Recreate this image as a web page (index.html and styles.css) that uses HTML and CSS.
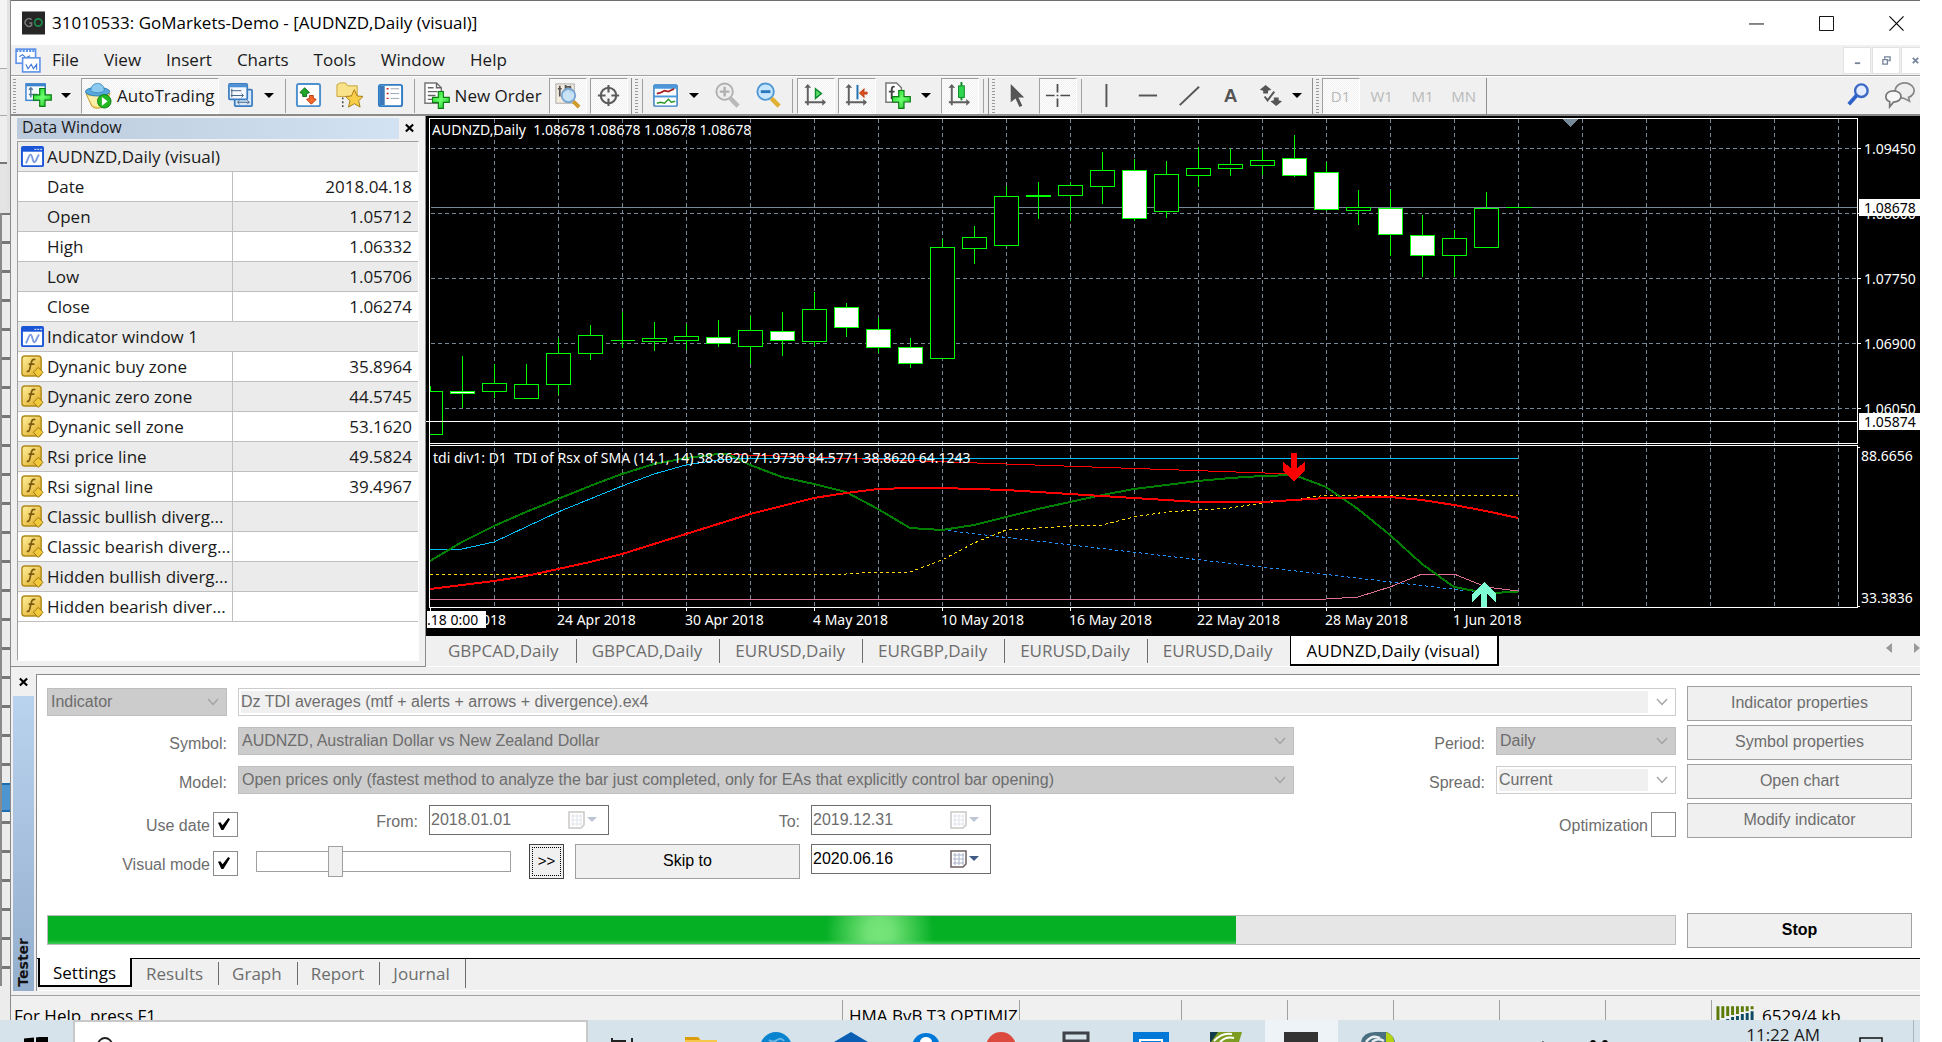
FILE: index.html
```html
<!DOCTYPE html>
<html lang="en">
<head>
<meta charset="utf-8">
<title>31010533: GoMarkets-Demo - [AUDNZD,Daily (visual)]</title>
<link rel="stylesheet" href="styles.css">
</head>
<body>
<svg class="defs" aria-hidden="true">
  <defs>
    <linearGradient id="gold" x1="0" y1="0" x2="1" y2="1"><stop offset="0" stop-color="#fff0a0"/><stop offset="1" stop-color="#dfa81c"/></linearGradient>
    <linearGradient id="grn" x1="0" y1="0" x2="1" y2="1"><stop offset="0" stop-color="#0fd01f"/><stop offset=".5" stop-color="#6dff6d"/><stop offset="1" stop-color="#08b018"/></linearGradient>
    <symbol id="i-fn" viewBox="0 0 24 24"><rect x="1" y="1" width="20" height="21" rx="3" fill="url(#gold)" stroke="#b08a1a" stroke-width="1.500"/><path d="M15 5c-3-1.500-4 1-4.500 4l-1.500 6c-.5 2-1.500 2.500-3 2M8 9.500h6" fill="none" stroke="#7a5a10" stroke-width="1.800"/><path d="M18 13l5 5-5 5.500-5-5.500z" fill="#f3c93c" stroke="#9a7613"/></symbol>
    <symbol id="i-win" viewBox="0 0 24 22"><rect x="1" y="1" width="22" height="20" rx="1" fill="#fff" stroke="#1b56d8" stroke-width="2"/><path d="M1 1h22v5H1z" fill="#1b56d8"/><path d="M14 3.500h2m1 0h2m1 0h2" stroke="#fff"/><path d="M5 18C7 16 8 9 10 9s2 8 4 8 3-7 5-8" fill="none" stroke="#7c9ae0" stroke-width="2"/></symbol>
    <symbol id="i-plus" viewBox="0 0 16 16"><path d="M5.800.6h4.400v5.200h5.200v4.400h-5.200v5.200H5.800v-5.200H.6V5.800h5.200z" fill="url(#grn)" stroke="#0b7d12"/></symbol>
    <symbol id="i-axes" viewBox="0 0 28 28"><path d="M6 5v19M3 21h19" fill="none" stroke="#606060" stroke-width="2"/><path d="M6 2l3.500 4h-7zM25 21l-4 3.500v-7z" fill="#606060"/></symbol>
    <symbol id="i-cal" viewBox="0 0 18 18"><path d="M1 1h15v13l-3 3H1z" fill="#fff" stroke="#6b5f60" stroke-width="1.500"/><path d="M3 5h11M3 9h11M3 13h11M5 3v12M9 3v12M13 3v12" stroke="#a9b4c8"/></symbol>
    <symbol id="i-chev" viewBox="0 0 12 8"><path d="M1 1l5 5.500L11 1" fill="none" stroke="#a2a2a2" stroke-width="1.300"/></symbol>
  </defs>
</svg>

<div class="desktop">
  <div class="behind" aria-hidden="true">
    <div class="behind-top"></div>
    <div class="behind-grid"><div class="behind-sel"></div></div>
  </div>

  <div class="app">
    <header class="titlebar">
      <svg class="logo" viewBox="0 0 24 24"><rect width="24" height="24" fill="#262626"/><path d="M10 8.500a4 4 0 1 0 0 6v-2.500H7.500" fill="none" stroke="#7b7b7b" stroke-width="1.600"/><circle cx="17" cy="11.500" r="3.800" fill="none" stroke="#1e8a4a" stroke-width="1.800"/></svg>
      <h1>31010533: GoMarkets-Demo - [AUDNZD,Daily (visual)]</h1>
      <div class="winctl">
        <button aria-label="Minimize"><svg viewBox="0 0 16 16"><path d="M0 8.500h16" stroke="#000"/></svg></button>
        <button aria-label="Maximize"><svg viewBox="0 0 16 16"><path d="M.5.5h15v15H.5z" fill="none" stroke="#000"/></svg></button>
        <button aria-label="Close"><svg viewBox="0 0 16 16"><path d="M.5.5l15 15m0-15l-15 15" stroke="#000" stroke-width="1.200"/></svg></button>
      </div>
    </header>

    <nav class="menubar">
      <svg class="menu-icon" viewBox="0 0 24 24"><rect x="1" y="2" width="18" height="13" fill="#fff" stroke="#5f93e8" stroke-width="1.500"/><path d="M1 3h18" stroke="#5f93e8" stroke-width="3" stroke-dasharray="2 1"/><path d="M4 9l3-2 3 3 4-2" fill="none" stroke="#3f78d8"/><rect x="7" y="10" width="16" height="13" fill="#fff" stroke="#5f93e8" stroke-width="1.500"/><path d="M10 16l2 4 3-4 2 4 3-4v5" fill="none" stroke="#3f78d8"/></svg>
      <a href="#">File</a><a href="#">View</a><a href="#">Insert</a><a href="#">Charts</a><a href="#">Tools</a><a href="#">Window</a><a href="#">Help</a>
      <div class="mdictl">
        <button aria-label="Minimize chart"><svg viewBox="0 0 10 10"><path d="M2 8h6" stroke="#76859a" stroke-width="2"/></svg></button>
        <button aria-label="Restore chart"><svg viewBox="0 0 10 10"><path d="M3 3V1h6v4H7M1 4h5v5H1z" fill="none" stroke="#76859a" stroke-width="1.500"/></svg></button>
        <button aria-label="Close chart"><svg viewBox="0 0 10 10"><path d="M2 2l6 6m0-6L2 8" stroke="#76859a" stroke-width="2"/></svg></button>
      </div>
    </nav>

    <div class="toolbar">
      <div class="group">
        <i class="grip"></i>
        <div class="split">
          <button class="tb" aria-label="New chart"><svg viewBox="0 0 28 28"><rect x="1" y="2" width="20" height="17" fill="#f6faff" stroke="#3c82cc" stroke-width="1.500"/><path d="M1 3h20" stroke="#3c82cc" stroke-width="3"/><path d="M6 6v10M4 13h9M4 8l2-2 2 2" stroke="#56789a" stroke-width="1.500" fill="none"/><use href="#i-plus" x="8" y="6" width="20" height="20"/></svg></button>
          <button class="drop" aria-label="Charts list"></button>
        </div>
        <button class="tb pressed wide"><svg viewBox="0 0 28 28"><path d="M1 12l6 13c3 3 9 3 12 0l7-13z" fill="#f3d866" stroke="#c29a35"/><path d="M3 15l5 9 6 2V14z" fill="#fbeea6"/><ellipse cx="13" cy="10" rx="12.500" ry="4.500" fill="#5aa9dc" stroke="#2f7fb4"/><path d="M6 9c0-10 14-10 14 0-4 3-10 3-14 0z" fill="#8ccaf0" stroke="#3b8cc0"/><circle cx="20" cy="20" r="7" fill="#22b822" stroke="#0c7d12"/><path d="M17.500 15.500l6 4.500-6 4.500z" fill="#fff"/></svg>AutoTrading</button>
        <div class="split">
          <button class="tb" aria-label="Profiles"><svg viewBox="0 0 28 28"><rect x="8" y="8" width="18" height="17" rx="1" fill="#d6e8fa" stroke="#3b7cc0" stroke-width="1.800"/><path d="M11 21h12M13 19l-2 2 2 2M21 19l2 2-2 2" stroke="#44617f" fill="none"/><rect x="2" y="2" width="19" height="16" rx="1" fill="#f4f9ff" stroke="#3b7cc0" stroke-width="1.800"/><path d="M2 4h19" stroke="#4d90d6" stroke-width="3"/><path d="M4 9h11M4 14h13M5 7v9M15 12l2 2-2 2" stroke="#44617f" fill="none"/></svg></button>
          <button class="drop" aria-label="Profiles list"></button>
        </div>
        <i class="sep"></i>
        <button class="tb" aria-label="Market Watch"><svg viewBox="0 0 28 28"><rect x="2" y="2" width="24" height="23" rx="2" fill="#fff" stroke="#4d90cf" stroke-width="2"/><path d="M10 6l5 5-3 1v3H8v-3l-3-1z" fill="#1fa82a" stroke="#0b6d14"/><path d="M17 23l-5-5 3-1v-3h4v3l3 1z" fill="#f2682c" stroke="#c03a10"/></svg></button>
        <button class="tb" aria-label="Navigator"><svg viewBox="0 0 28 28"><path d="M1 3l3-2h6l2 3h10v11H1z" fill="#f9e28a" stroke="#c9a235"/><path d="M7 16v10" stroke="#444" stroke-width="1.500" stroke-dasharray="2 2"/><path d="M19 8l3 6.500 6 .5-4.500 4.500 1.500 6.500-6-3.500-6 3.500 1.500-6.500L10 15l6-.5z" fill="#f9cf4a" stroke="#a97a14"/></svg></button>
        <button class="tb" aria-label="Data Window"><svg viewBox="0 0 28 28"><rect x="2" y="3" width="24" height="22" rx="2" fill="#fff" stroke="#2e7cc4" stroke-width="2"/><path d="M3 4h5v20H3z" fill="#3b78b8"/><path d="M10 7h2m-2 5h2m-2 5h2" stroke="#c22" stroke-width="1.500"/><path d="M14 7h9m-9 5h9m-9 5h9" stroke="#9aa2b0"/></svg></button>
        <i class="sep"></i>
        <button class="tb wide"><svg viewBox="0 0 28 28"><path d="M2 1h12l5 5v16H2z" fill="#fff" stroke="#777" stroke-width="1.500"/><path d="M14 1v5h5M5 6h6M5 10h10M5 14h8M5 18h6" stroke="#666" fill="none" stroke-width="1.500"/><use href="#i-plus" x="9" y="9" width="19" height="19"/></svg>New Order</button>
        <button class="tb pressed" aria-label="Strategy Tester"><svg viewBox="0 0 28 28"><rect x="2" y="2" width="19" height="20" fill="#f3ecdf" stroke="#aaa"/><path d="M6 4v11M12 3v7M17 4v7M4 7h4M12 5h5" stroke="#555" stroke-width="1.800"/><circle cx="15" cy="14" r="7" fill="#bfe0fa" fill-opacity=".85" stroke="#7aa6d2" stroke-width="2"/><path d="M20 20l6 6" stroke="#d09a2b" stroke-width="4"/></svg></button>
        <button class="tb pressed" aria-label="Crosshair mode"><svg viewBox="0 0 28 28"><circle cx="14" cy="14" r="8" fill="none" stroke="#5c5c5c" stroke-width="2.200"/><path d="M14 3v8m0 6v8M3 14h8m6 0h8" stroke="#5c5c5c" stroke-width="2.200"/></svg></button>
      </div>
      <div class="group">
        <i class="grip"></i><i class="sep"></i>
        <div class="split">
          <button class="tb" aria-label="Indicators"><svg viewBox="0 0 28 28"><rect x="2" y="3" width="24" height="22" rx="1" fill="#fff" stroke="#2f7cc2" stroke-width="1.500"/><path d="M2 5h24" stroke="#4b97da" stroke-width="4"/><path d="M2 15h24" stroke="#4b97da" stroke-width="2"/><path d="M5 12l4-1 4-2 4 1 6-3" fill="none" stroke="#a22" stroke-width="1.800"/><path d="M5 22l4-1 4 1 4-4 3 3 4-1" fill="none" stroke="#2a9a2a" stroke-width="1.500"/></svg></button>
          <button class="drop" aria-label="Indicators list"></button>
        </div>
        <button class="tb" aria-label="Zoom in"><svg viewBox="0 0 28 28"><circle cx="11" cy="10" r="8.500" fill="#eee" stroke="#b0b0b0" stroke-width="2"/><path d="M6 10h10M11 5v10" stroke="#b0b0b0" stroke-width="2.500"/><path d="M17 17l8 8" stroke="#b8b8b8" stroke-width="4.500"/></svg></button>
        <button class="tb" aria-label="Zoom out"><svg viewBox="0 0 28 28"><circle cx="11" cy="10" r="8.500" fill="#c6e6fc" stroke="#4f97d4" stroke-width="2"/><path d="M6 10h10" stroke="#2b78bd" stroke-width="3"/><path d="M17 17l8 8" stroke="#e0b032" stroke-width="4.500"/></svg></button>
        <i class="sep"></i>
        <button class="tb pressed" aria-label="Auto scroll"><svg viewBox="0 0 28 28"><use href="#i-axes"/><path d="M14 7l6 5-6 5z" fill="#5fe06f" stroke="#0d8a2a" stroke-width="1.500"/></svg></button>
        <button class="tb pressed" aria-label="Chart shift"><svg viewBox="0 0 28 28"><use href="#i-axes"/><path d="M15 3v15" stroke="#1e6fb0" stroke-width="2"/><path d="M17 11.500l5-4.500-.5 3.500H25v2h-3.500l.5 3.500z" fill="#e0501c" stroke="#b83a10"/></svg></button>
        <div class="split">
          <button class="tb" aria-label="Templates"><svg viewBox="0 0 28 28"><path d="M2 1h11l5 5v15H2z" fill="#fff" stroke="#777" stroke-width="1.500"/><path d="M11 5c-3-1-3 2-3 4v9M5 10h6" stroke="#444" fill="none" stroke-width="2"/><use href="#i-plus" x="8" y="8" width="20" height="20"/></svg></button>
          <button class="drop" aria-label="Templates list"></button>
        </div>
        <button class="tb pressed" aria-label="Candlesticks"><svg viewBox="0 0 28 28"><use href="#i-axes"/><path d="M16 0v19" stroke="#0d8a2a" stroke-width="2"/><rect x="13" y="4" width="6" height="12" fill="#2fd44f" stroke="#0d8a2a"/></svg></button>
        <i class="sep"></i>
      </div>
      <div class="group">
        <i class="grip"></i>
        <button class="tb" aria-label="Cursor"><svg viewBox="0 0 28 28"><path d="M8 2v19l5-4 4 9 3-1.500-4-8.500h6z" fill="#555"/></svg></button>
        <button class="tb pressed" aria-label="Crosshair"><svg viewBox="0 0 28 28"><path d="M14 2v9m0 6v9M2 14h9m6 0h10M14 13.200v1.600" stroke="#4c4c4c" stroke-width="1.800"/></svg></button>
        <i class="sep"></i>
        <button class="tb" aria-label="Vertical line"><svg viewBox="0 0 28 28"><path d="M16 2v24" stroke="#555" stroke-width="2"/></svg></button>
        <button class="tb" aria-label="Horizontal line"><svg viewBox="0 0 28 28"><path d="M7 14h19" stroke="#555" stroke-width="2"/></svg></button>
        <button class="tb" aria-label="Trendline"><svg viewBox="0 0 28 28"><path d="M7 24L27 5" stroke="#555" stroke-width="2"/></svg></button>
        <button class="tb letter">A</button>
        <div class="split">
          <button class="tb" aria-label="Arrows"><svg viewBox="0 0 28 28"><path d="M11 3l6 5-3.500 1v3h-5V9L5 8zM22 25l-6-5 3.500-1v-3h5v3l3.500 1z" fill="#555"/><path d="M10 15l3 4 7-9" fill="none" stroke="#555" stroke-width="2"/></svg></button>
          <button class="drop" aria-label="Arrows list"></button>
        </div>
      </div>
      <div class="group">
        <i class="grip"></i>
        <button class="tb pressed tf" disabled>D1</button><button class="tb tf" disabled>W1</button><button class="tb tf" disabled>M1</button><button class="tb tf" disabled>MN</button>
      </div>
      <div class="tb-right">
        <button class="tb" aria-label="Search"><svg viewBox="0 0 28 28"><circle cx="18" cy="9" r="6.500" fill="#e3edff" stroke="#3a68c4" stroke-width="2.500"/><path d="M13 14l-8 9" stroke="#2d62c8" stroke-width="4"/></svg></button>
        <button class="tb chat" aria-label="Chat"><svg viewBox="0 0 36 28"><path d="M12 10a10 8 0 1 1 14 6l1 4-6-3c-5 0-9-3-9-7z" fill="#eee" stroke="#888" stroke-width="1.800"/><path d="M2 15a8 6 0 1 1 8 6l-4 5v-5.500C3 19.500 2 17 2 15z" fill="#f7f7f7" stroke="#777" stroke-width="1.800"/></svg></button>
      </div>
    </div>

    <main class="workspace">
      <aside class="datawin">
        <div class="caption"><h2>Data Window</h2><button class="close" aria-label="Close data window"><svg viewBox="0 0 10 10"><path d="M1 1l8 8m0-8L1 9" stroke="#000" stroke-width="2.400"/></svg></button></div>
        <div class="datalist">
          <table>
            <colgroup><col class="name-col"><col></colgroup>
            <tbody>
              <tr><th colspan="2"><svg><use href="#i-win"/></svg>AUDNZD,Daily (visual)</th></tr>
              <tr><td class="sub">Date</td><td>2018.04.18</td></tr>
              <tr><td class="sub">Open</td><td>1.05712</td></tr>
              <tr><td class="sub">High</td><td>1.06332</td></tr>
              <tr><td class="sub">Low</td><td>1.05706</td></tr>
              <tr><td class="sub">Close</td><td>1.06274</td></tr>
              <tr><th colspan="2"><svg><use href="#i-win"/></svg>Indicator window 1</th></tr>
              <tr><td><svg><use href="#i-fn"/></svg>Dynanic buy zone</td><td>35.8964</td></tr>
              <tr><td><svg><use href="#i-fn"/></svg>Dynanic zero zone</td><td>44.5745</td></tr>
              <tr><td><svg><use href="#i-fn"/></svg>Dynanic sell zone</td><td>53.1620</td></tr>
              <tr><td><svg><use href="#i-fn"/></svg>Rsi price line</td><td>49.5824</td></tr>
              <tr><td><svg><use href="#i-fn"/></svg>Rsi signal line</td><td>39.4967</td></tr>
              <tr><td><svg><use href="#i-fn"/></svg>Classic bullish diverg...</td><td></td></tr>
              <tr><td><svg><use href="#i-fn"/></svg>Classic bearish diverg...</td><td></td></tr>
              <tr><td><svg><use href="#i-fn"/></svg>Hidden bullish diverg...</td><td></td></tr>
              <tr><td><svg><use href="#i-fn"/></svg>Hidden bearish diver...</td><td></td></tr>
            </tbody>
          </table>
        </div>
      </aside>

      <section class="chartwin">
        <div class="chart">
          <svg class="plot" role="img" aria-label="AUDNZD daily candlestick chart">
            <g transform="translate(-426 -117)">
              <path class="grid" d="M494.500 120V608M558.500 120V608M622.500 120V608M686.500 120V608M750.500 120V608M814.500 120V608M878.500 120V608M942.500 120V608M1006.500 120V608M1070.500 120V608M1134.500 120V608M1198.500 120V608M1262.500 120V608M1326.500 120V608M1390.500 120V608M1454.500 120V608M1518.500 120V608M1582.500 120V608M1646.500 120V608M1710.500 120V608M1774.500 120V608M1838.500 120V608"/>
              <path class="grid" d="M431 149.500H4000M431 214.500H4000M431 279.500H4000M431 344.500H4000M431 409.500H4000"/>
              <path class="price" d="M431 208.500H4000"/>
              <path class="candle" d="M430.500 387V392M462.500 357V409M494.500 365V399M526.500 365V399M558.500 339V396M590.500 326V361M622.500 313V349M654.500 323V352M686.500 325V351M718.500 321V348M750.500 317V365M782.500 313V357M814.500 293V347M846.500 304V338M878.500 319V354M910.500 339V369M942.500 240V359M974.500 227V265M1006.500 187V246M1038.500 183V220M1070.500 183V222M1102.500 153V205M1134.500 160V222M1166.500 162V219M1198.500 148V188M1230.500 150V177M1262.500 151V176M1294.500 136V178M1326.500 163V212M1358.500 191V226M1390.500 191V257M1422.500 216V278M1454.500 231V278M1486.500 193V248"/>
              <path class="candle hollow" d="M418.500 392.500h24v43h-24zM482.500 384.500h24v8h-24zM514.500 385.500h24v14h-24zM546.500 354.500h24v31h-24zM578.500 336.500h24v18h-24zM610.500 341.500h24M642.500 339.500h24v3h-24zM674.500 337.500h24v4h-24zM738.500 331.500h24v16h-24zM802.500 310.500h24v32h-24zM930.500 248.500h24v111h-24zM962.500 238.500h24v11h-24zM994.500 197.500h24v49h-24zM1026.500 196.500h24v1h-24zM1058.500 186.500h24v10h-24zM1090.500 171.500h24v16h-24zM1154.500 175.500h24v37h-24zM1186.500 169.500h24v7h-24zM1218.500 165.500h24v4h-24zM1250.500 161.500h24v5h-24zM1346.500 208.500h24v3h-24zM1442.500 239.500h24v17h-24zM1474.500 209.500h24v39h-24zM1506 208.500h26"/>
              <path class="candle solid" d="M450.500 392.500h24v2h-24zM706.500 338.500h24v6h-24zM770.500 332.500h24v9h-24zM834.500 308.500h24v20h-24zM866.500 330.500h24v18h-24zM898.500 348.500h24v16h-24zM1122.500 171.500h24v48h-24zM1282.500 159.500h24v17h-24zM1314.500 173.500h24v37h-24zM1378.500 209.500h24v26h-24zM1410.500 236.500h24v20h-24z"/>
              <path d="M426 120H429V609H426z" fill="#000"/>
              <path d="M1562 120h16l-8 8z" fill="#778899"/>
              <path class="line" stroke="#00bfff" d="M430 550H462L494 543L526 528L558 513L590 500L622 487L654 475L686 466L718 461L742 459H1518"/>
              <path class="line" stroke="#ff0000" d="M718 455L1294 475"/>
              <path class="line dash" stroke="#1e90ff" d="M942 531L1486 594"/>
              <path class="line dash" stroke="#ffd700" d="M430 575H846L878 573H910L942 561L974 544L1006 531L1038 529L1070 527L1102 526L1134 518L1166 513L1198 511L1230 509L1262 504L1294 501L1326 496H1518"/>
              <path class="line" stroke="#db7093" d="M430 600H1326L1358 598L1390 588L1422 575H1454L1486 588L1518 592"/>
              <path class="line thick" stroke="#008000" d="M430 562L462 543L494 527L526 513L558 500L590 487L622 475L654 465L686 459L718 455H728L750 466L782 478L814 485L846 493L878 510L910 529L942 531L974 526L1006 518L1038 510L1070 503L1102 496L1134 490L1166 486L1198 482L1230 479L1262 477L1294 476L1326 488L1358 510L1390 536L1422 565L1454 588L1486 594L1518 593"/>
              <path class="line thick" stroke="#ff0000" d="M430 590L462 586L494 582L526 577L558 570L590 563L622 555L654 545L686 535L718 525L750 515L782 507L814 499L846 494L878 490L910 489H942L1006 491L1038 493L1070 495L1134 499L1198 503H1262L1294 501L1326 499L1390 498L1422 501L1454 506L1486 512L1518 519"/>
              <path d="M1291 454h6v15l8-6v8l-11 12-11-12v-8l8 6z" fill="#ff0000"/>
              <path d="M1481 608h6v-13l9 8v-8l-12-12-12 12v8l9-8z" fill="#7fffd4"/>
              <path class="frame" d="M4000 119.500H429.500V608.500H4000M429 444.500H4000M429 446.500H4000M426 422.500H4000M430.500 608V612M558.500 608V612M686.500 608V612M814.500 608V612M942.500 608V612M1070.500 608V612M1198.500 608V612M1326.500 608V612M1454.500 608V612"/>
              <g class="lbl">
                <text x="432" y="136" xml:space="preserve">AUDNZD,Daily  1.08678 1.08678 1.08678 1.08678</text>
                <text x="433" y="464" xml:space="preserve">tdi div1: D1  TDI of Rsx of SMA (14,1, 14) 38.8620 71.9730 84.5771 38.8620 64.1243</text>
                <text x="482" y="626">018</text><text x="557" y="626">24 Apr 2018</text><text x="685" y="626">30 Apr 2018</text><text x="813" y="626">4 May 2018</text><text x="941" y="626">10 May 2018</text><text x="1069" y="626">16 May 2018</text><text x="1197" y="626">22 May 2018</text><text x="1325" y="626">28 May 2018</text><text x="1453" y="626">1 Jun 2018</text>
                <path d="M427 612h59v17h-59z" fill="#fff"/><text class="inv" x="427" y="626">.18 0:00</text>
              </g>
            </g>
          </svg>
          <svg class="axis" role="img" aria-label="Price axis">
            <g transform="translate(-1857 -117)">
              <path class="frame" d="M1857.500 119V445M1857.500 446V609M1858 149.500h3M1858 214.500h3M1858 279.500h3M1858 344.500h3M1858 409.500h3M1858 448.500h2M1858 607.500h2"/>
              <g class="lbl">
                <text x="1864" y="155">1.09450</text><text x="1864" y="220">1.08600</text><text x="1864" y="285">1.07750</text><text x="1864" y="350">1.06900</text><text x="1864" y="415">1.06050</text><text x="1861" y="462">88.6656</text><text x="1861" y="604">33.3836</text>
                <path d="M1859 200h61v17h-61zM1859 414h61v17h-61z" fill="#fff"/>
                <text class="inv" x="1864" y="214">1.08678</text><text class="inv" x="1864" y="428">1.05874</text>
              </g>
            </g>
          </svg>
        </div>
        <div class="charttabs">
          <button>GBPCAD,Daily</button><button>GBPCAD,Daily</button><button>EURUSD,Daily</button><button>EURGBP,Daily</button><button>EURUSD,Daily</button><button>EURUSD,Daily</button><button class="on">AUDNZD,Daily (visual)</button>
          <div class="scrollers"><button aria-label="Scroll tabs left"><svg viewBox="0 0 6 10"><path d="M6 0v10L0 5z" fill="#999"/></svg></button><button aria-label="Scroll tabs right"><svg viewBox="0 0 6 10"><path d="M0 0v10l6-5z" fill="#999"/></svg></button></div>
        </div>
      </section>
    </main>

    <section class="tester">
      <div class="side">
        <button class="close" aria-label="Close tester"><svg viewBox="0 0 10 10"><path d="M1 1l8 8m0-8L1 9" stroke="#000" stroke-width="2.400"/></svg></button>
        <div class="side-strip"><span>Tester</span></div>
      </div>
      <div class="tester-main">
        <form class="panel">
          <div class="fields">
            <div class="row">
              <div class="combo w180"><select disabled aria-label="Test type"><option>Indicator</option></select><svg><use href="#i-chev"/></svg></div>
              <div class="combo edit grow"><select disabled aria-label="Program"><option>Dz TDI averages (mtf + alerts + arrows + divergence).ex4</option></select><svg><use href="#i-chev"/></svg></div>
            </div>
            <div class="row">
              <label class="lead" for="symbol">Symbol:</label>
              <div class="combo grow"><select disabled id="symbol"><option>AUDNZD, Australian Dollar vs New Zealand Dollar</option></select><svg><use href="#i-chev"/></svg></div>
              <label class="mid" for="period">Period:</label>
              <div class="combo w180"><select disabled id="period"><option>Daily</option></select><svg><use href="#i-chev"/></svg></div>
            </div>
            <div class="row">
              <label class="lead" for="model">Model:</label>
              <div class="combo grow"><select disabled id="model"><option>Open prices only (fastest method to analyze the bar just completed, only for EAs that explicitly control bar opening)</option></select><svg><use href="#i-chev"/></svg></div>
              <label class="mid" for="spread">Spread:</label>
              <div class="combo edit w180"><select disabled id="spread"><option>Current</option></select><svg><use href="#i-chev"/></svg></div>
            </div>
            <div class="row">
              <div class="tick"><label for="usedate">Use date</label><input type="checkbox" id="usedate" checked></div>
              <label class="mid" for="from">From:</label>
              <div class="date off w180"><input type="text" id="from" value="2018.01.01" disabled><svg><use href="#i-cal"/></svg><i></i></div>
              <label class="mid" for="to">To:</label>
              <div class="date off w180"><input type="text" id="to" value="2019.12.31" disabled><svg><use href="#i-cal"/></svg><i></i></div>
              <div class="tick last"><label for="opt">Optimization</label><input type="checkbox" id="opt"></div>
            </div>
            <div class="row">
              <div class="tick"><label for="visual">Visual mode</label><input type="checkbox" id="visual" checked></div>
              <input class="speed" type="range" min="0" max="64" value="19" aria-label="Visual speed">
              <button type="button" class="step">&gt;&gt;</button>
              <button type="button" class="btn live">Skip to</button>
              <div class="date w180"><input type="text" value="2020.06.16" aria-label="Skip to date"><svg><use href="#i-cal"/></svg><i></i></div>
            </div>
            <div class="progress" role="progressbar" aria-valuenow="73" aria-label="Test progress"><div class="fill" style="width:73%"></div></div>
          </div>
          <div class="actions">
            <button type="button" class="btn" disabled>Indicator properties</button>
            <button type="button" class="btn" disabled>Symbol properties</button>
            <button type="button" class="btn" disabled>Open chart</button>
            <button type="button" class="btn" disabled>Modify indicator</button>
            <button type="button" class="btn stop">Stop</button>
          </div>
        </form>
        <div class="testertabs"><button class="on">Settings</button><button>Results</button><button>Graph</button><button>Report</button><button>Journal</button></div>
      </div>
    </section>

    <footer class="status">
      <span class="help">For Help, press F1</span>
      <span class="cell c-a">HMA BvB T3 OPTIMIZ</span><span class="cell c-b"></span><span class="cell c-c"></span><span class="cell c-c"></span><span class="cell c-c"></span><span class="cell c-c"></span><span class="cell c-c"></span>
      <span class="cell net"><svg viewBox="0 0 40 20"><path d="M2 0v14M7 0v12M12 0v10M17 0v9M22 0v8M27 0v6M32 0v5M37 0v3" stroke="#5b7a08" stroke-width="3"/><path d="M7 14v6M12 13v7M17 11v9M22 10v10M27 8v12M32 7v13M37 5v15" stroke="#0b4a63" stroke-width="3"/></svg>6529/4 kb</span>
    </footer>
  </div>
</div>

<div class="taskbar">
  <svg class="start" viewBox="0 0 24 6"><path d="M0 1.500l10-1V6H0zM12 .4L24-1v7H12z" fill="#000"/></svg>
  <div class="search"><svg viewBox="0 0 20 10"><circle cx="8" cy="8" r="7" fill="none" stroke="#222" stroke-width="1.800"/></svg></div>
  <svg class="apps" viewBox="0 0 830 22">
    <path d="M4 18v4M4 21h14M24 18v4" stroke="#222" stroke-width="2" fill="none"/>
    <path d="M77 17h13l3 3h16v2H77z" fill="#f5c84a"/><path d="M77 17h13l2 3H77z" fill="#dd9c0e"/>
    <circle cx="168" cy="28" r="16" fill="#0b84d0"/><path d="M161 20q4 3 8 0t7 1" stroke="#6bb8e6" stroke-width="2" fill="none"/>
    <path d="M226 22l17-10 17 10z" fill="#0a5fb4"/>
    <circle cx="318" cy="27" r="14" fill="#0078d7"/><path d="M312 22a6 5 0 0 1 12 0" fill="#fff"/>
    <circle cx="393" cy="27" r="15" fill="#dc4a3f"/>
    <path d="M456 22V13h24v9M456 21h24" fill="none" stroke="#3f4148" stroke-width="3"/>
    <path d="M525 12h36v10h-36z" fill="#0078d7"/><path d="M532 22v-2h22v2" fill="none" stroke="#fff" stroke-width="2"/>
    <path d="M602 12h32l-3 10h-29z" fill="#7d9d22"/><path d="M602 12h8l-7 10h-1z" fill="#123a48"/><path d="M606 21q8-9 18-7M612 22q6-6 14-4" stroke="#fff" stroke-width="2" fill="none"/>
    <path d="M657 0h73v22h-73z" fill="#edf3f6"/><path d="M676 12h34v10h-34z" fill="#333"/>
    <path d="M753 22q2-10 14-10h12q7 4 8 10z" fill="#4a6f80"/><path d="M778 12q8 3 8 10h-8z" fill="#b5d313"/><path d="M758 22q6-8 14-4M764 22q6-5 12-1" stroke="#e8eef0" stroke-width="2.500" fill="none"/>
  </svg>
  <div class="tray">
    <svg class="dots" viewBox="0 0 70 6"><path d="M1 4v2" stroke="#222"/><circle cx="51" cy="6" r="3"/><circle cx="63" cy="6" r="3"/></svg>
    <time>11:22 AM</time>
    <svg class="note" viewBox="0 0 24 5"><path d="M1 5V1h22v4" fill="none" stroke="#111" stroke-width="1.500"/></svg>
  </div>
</div>
</body>
</html>
```
FILE: styles.css
```css
* { box-sizing: border-box; }
body { margin: 0; padding-right: 22px; background: #fff; font: 17px/24px "Open Sans", "Noto Sans", sans-serif; color: #1a1a1a; overflow: hidden; }
button { font: inherit; color: inherit; background: none; border: 0; padding: 0; }
h1, h2 { margin: 0; font: inherit; }
a { color: inherit; text-decoration: none; }
svg { display: block; flex: none; }
.defs { position: absolute; width: 0; height: 0; }

.desktop { display: flex; height: 1020px; overflow: hidden; }
.app { flex: 1; min-width: 0; display: flex; flex-direction: column; background: #f0f0f0; border-top: 1px solid #6e6e6e; }

.behind { width: 11px; display: flex; flex-direction: column; background: #ececec; border-right: 1px solid #8a8a8a; }
.behind-top { height: 213px; background: linear-gradient(#f4f4f4 0 68px, #aaa 68px 69px, #eee 69px 115px, #aaa 115px 116px, #eee 116px 162px, #777 162px 164px, #e4e4e4 164px); border-right: 3px solid #e2e2e2; }
.behind-grid { height: 773px; border-left: 2px solid #8a8a8a; background: repeating-linear-gradient(#777 0 2px, #ececec 2px 28px, #777 28px 29px); padding-top: 570px; }
.behind-sel { height: 29px; background: #4d95d0; border: solid #1d6cae; border-width: 2px 0; }

.titlebar { display: flex; align-items: center; height: 44px; background: #fff; padding-left: 11px; }
.logo { width: 23px; height: 24px; margin-right: 7px; }
.titlebar h1 { flex: 1; font-size: 17px; color: #000; }
.winctl { display: flex; }
.winctl button { width: 70px; height: 44px; display: grid; place-items: center; }
.winctl button:last-child { width: 48px; margin-left: 11px; }
.winctl svg { width: 15px; height: 15px; }

.menubar { display: flex; align-items: center; height: 32px; border-bottom: 1px solid #a0a0a0; padding-left: 4px; }
.menu-icon { width: 26px; height: 26px; margin-right: 11px; }
.menubar a { margin-right: 25px; }
.mdictl { display: flex; gap: 1px; margin-left: auto; overflow: hidden; width: 77px; align-self: stretch; padding: 2px 0 1px; }
.mdictl button { flex: none; width: 28px; background: #fff; border: 1px solid #e2e2e2; display: grid; place-items: center; }
.mdictl svg { width: 9px; height: 9px; }

.toolbar { display: flex; height: 42px; border-top: 1px solid #fff; border-bottom: 2px solid #8b8b8b; box-sizing: content-box; height: 38px; padding-top: 1px; }
.group { display: flex; align-items: center; gap: 3px; padding: 0 3px; border-right: 1px solid #8f8f8f; }
.group:first-child { padding-left: 2px; }
.grip { width: 3px; height: 34px; background: repeating-linear-gradient(#9a9a9a 0 1px, #f0f0f0 1px 3px); }
.sep { width: 1px; height: 34px; margin: 0 1px; background: #a0a0a0; }
.tb { width: 38px; height: 36px; display: flex; align-items: center; justify-content: center; border: 1px solid transparent; white-space: nowrap; }
.tb svg { width: 27px; height: 27px; }
.pressed { background: repeating-conic-gradient(#fff 0 25%, #f0f0f0 0 50%) 0 0 / 2px 2px; border-color: #a0a0a0 #fff #fff #a0a0a0; }
.wide { width: auto; gap: 5px; padding: 0 3px; }
.split { display: flex; padding-right: 3px; }
.drop { width: 18px; display: grid; place-items: center; }
.drop::after { content: ""; border: 5px solid transparent; border-top-color: #000; border-bottom: 0; }
.letter { font: bold 19px "Liberation Sans", sans-serif; color: #555; padding-left: 6px; }
.tf { font-size: 15px; color: #b9b9b9; }
.tb-right { display: flex; gap: 10px; align-items: center; margin-left: auto; overflow: hidden; width: 78px; }
.chat { flex: none; }
.chat svg { width: 34px; }

.workspace { display: flex; height: 551px; }
.datawin { width: 415px; padding: 2px 6px 5px 6px; border-right: 1px solid #8b8b8b; border-bottom: 1px solid #8b8b8b; display: flex; flex-direction: column; }
.caption { display: flex; height: 21px; line-height: 20px; }
.caption h2 { flex: 1; padding-left: 5px; font-size: 16px; line-height: 18px; background: linear-gradient(90deg, #bccbdc, #d2e2f3); }
.close { display: grid; place-items: center; }
.close svg { width: 9px; height: 10px; }
.caption .close { width: 20px; }
.datalist { flex: 1; margin-top: 2px; background: #fff; border: 1px solid #a0a0a0; border-right-color: #fff; border-bottom-color: #fff; }
table { width: 100%; border-collapse: collapse; table-layout: fixed; }
.name-col { width: 214px; }
td, th { height: 30px; padding: 0 6px 0 3px; border-bottom: 1px solid #bfbfbf; font-weight: 400; text-align: left; white-space: nowrap; }
td:first-child { border-right: 1px solid #bfbfbf; padding-right: 0; }
td + td { text-align: right; }
td.sub { padding-left: 29px; }
tr:nth-child(odd) { background: #ebebeb; }
table svg { display: inline-block; vertical-align: middle; width: 23px; height: 23px; margin: -4px 3px 0 0; }

.chartwin { flex: 1; min-width: 0; display: flex; flex-direction: column; }
.chart { display: flex; height: 518px; background: #000; }
.plot { flex: 1; min-width: 0; height: 518px; }
.axis { width: 63px; height: 518px; }
.plot path, .axis path { shape-rendering: crispEdges; }
.grid { fill: none; stroke: #778899; stroke-dasharray: 4 3; }
.price { stroke: #778899; }
.frame { fill: none; stroke: #fff; }
.candle { stroke: #00ff00; fill: none; }
.hollow { fill: #000; }
.solid { fill: #fff; }
.line { fill: none; stroke-width: 1; }
.dash { stroke-dasharray: 3 3; }
.thick { stroke-width: 2; }
.lbl text { font: 14px "Noto Sans", sans-serif; fill: #fff; }
.lbl .inv { fill: #000; }
.charttabs { display: flex; height: 33px; border-top: 2px solid #000; border-bottom: 1px solid #fff; color: #6d6d6d; padding-left: 6px; }
.charttabs > button { padding: 0 17px 0 16px; line-height: 30px; height: 30px; position: relative; }
.charttabs > button + button::before, .testertabs button + button::before { content: ""; position: absolute; left: 0; top: 3px; bottom: 3px; border-left: 1px solid #6d6d6d; }
.charttabs .on, .testertabs .on { background: #fff; color: #000; border: 1px solid #000; border-width: 0 2px 2px 1px; }
.charttabs > .on::before { display: none; }
.scrollers { margin-left: auto; display: flex; gap: 22px; align-items: center; padding-bottom: 6px; }
.scrollers svg { width: 6px; height: 10px; }

.tester { display: flex; margin-top: 7px; }
.side { width: 25px; padding-left: 2px; display: flex; flex-direction: column; }
.side .close { width: 21px; height: 16px; }
.side-strip { flex: 1; width: 21px; margin-top: 6px; background: linear-gradient(#b9d3ef, #94aecd); display: flex; align-items: flex-end; }
.side-strip span { writing-mode: vertical-rl; transform: rotate(180deg); font: bold 14px/21px "DejaVu Sans", sans-serif; color: #111; padding-top: 4px; }
.tester-main { flex: 1; min-width: 0; border-left: 1px solid #8b8b8b; border-top: 1px solid #8b8b8b; }
.panel { display: flex; gap: 11px; height: 283px; padding: 11px 8px 0 10px; background: #fff; font: 16px/20px "Liberation Sans", sans-serif; color: #6d6d6d; }
.fields { flex: 1; min-width: 0; display: flex; flex-direction: column; gap: 4px; }
.row { display: flex; gap: 11px; height: 35px; padding-top: 2px; }
.w180 { width: 180px; flex: none; }
.grow { flex: 1; min-width: 0; }
.lead { width: 180px; text-align: right; padding-top: 7px; }
.mid { width: 180px; text-align: right; padding-top: 7px; }
.combo { position: relative; height: 28px; background: #ccc; border: 1px solid #bfbfbf; }
.combo select { display: block; appearance: none; width: 100%; height: 26px; border: 0; background: none; font: inherit; color: #6d6d6d; opacity: 1; padding: 0 3px; }
.combo svg { position: absolute; right: 7px; top: 9px; width: 12px; height: 8px; }
.combo.edit { background: #fff; border-color: #ccc; padding: 2px; }
.combo.edit select { height: 22px; width: calc(100% - 25px); background: #f0f0f0; padding: 0; }
.tick { display: flex; gap: 3px; width: 191px; justify-content: flex-end; padding-top: 7px; }
.tick label { padding-top: 4px; }
.tick input { appearance: none; margin: 0; width: 25px; height: 25px; border: 1px solid #8b8b8b; background: #fff; }
.tick input:checked::after { content: ""; display: block; width: 12px; height: 12px; margin: 5px 0 0 4px; background: #000; clip-path: polygon(0 40%, 20% 35%, 38% 60%, 85% 0, 100% 10%, 45% 100%, 28% 100%); }
.last { margin-left: auto; }
.row .tick + .mid { width: 169px; }
.date { position: relative; height: 30px; border: 1px solid #6d6d6d; background: #fff; }
.date input { width: 130px; height: 28px; border: 0; padding: 0 1px; background: none; font: inherit; color: #000; }
.date svg { position: absolute; right: 22px; top: 5px; width: 18px; height: 18px; }
.date i { position: absolute; right: 11px; top: 11px; border: 5px solid transparent; border-top-color: #3f5a84; border-bottom: 0; }
.off input { color: #6d6d6d; }
.off svg, .off i { opacity: .35; }
.speed { appearance: none; width: 255px; height: 35px; margin: 0 7px; background: none; }
.speed::-webkit-slider-runnable-track { height: 21px; border: 1px solid #a0a0a0; background: #fff; }
.speed::-webkit-slider-thumb { appearance: none; width: 15px; height: 31px; margin-top: -6px; border: 1px solid #a0a0a0; background: #f0f0f0; }
.step { width: 35px; height: 35px; background: #f0f0f0; border: 1px solid #444; outline: 1px dotted #000; outline-offset: -4px; color: #000; font-size: 15px; }
.btn { width: 225px; height: 35px; flex: none; background: #f0f0f0; border: 1px solid #a0a0a0; color: #6d6d6d; }
.live { color: #000; }
.actions { display: flex; flex-direction: column; gap: 4px; }
.stop { margin-top: 71px; font-weight: 700; color: #000; }
.progress { height: 30px; margin-top: 34px; background: #e6e6e6; border: 1px solid #bcbcbc; }
.fill { height: 28px; background: linear-gradient(transparent 24px, rgba(90, 215, 110, .7)), radial-gradient(54px 60px at 70% 60%, #76e67a 0, #6fe074 25%, #06b025 100%); }
.testertabs { display: flex; height: 33px; border-top: 1px solid #000; border-bottom: 1px solid #fff; color: #6d6d6d; padding-left: 1px; font-size: 17px; }
.testertabs button { position: relative; padding: 0 15px 0 14px; line-height: 29px; height: 29px; }
.testertabs .on { margin-top: -1px; border-left-width: 2px; padding: 0 14px 0 13px; line-height: 30px; }
.testertabs button:last-child { border-right: 1px solid #6d6d6d; }
.testertabs .on + button::before { display: none; }

.status { display: flex; height: 26px; margin-top: 4px; border-top: 1px solid #a0a0a0; line-height: 20px; overflow: hidden; padding-top: 4px; color: #000; }
.help { flex: 1; padding: 6px 0 0 3px; }
.cell { border-left: 1px solid #a0a0a0; height: 24px; padding: 6px 0 0 6px; width: 106px; overflow: hidden; white-space: nowrap; flex: none; }
.c-a { width: 177px; }
.c-b { width: 162px; }
.net { width: 209px; display: flex; gap: 7px; padding-left: 4px; }
.net svg { width: 39px; height: 20px; }

.taskbar { display: flex; height: 22px; background: #d6e3ea; overflow: hidden; }
.start { width: 24px; height: 6px; margin: 17px 25px 0 24px; }
.search { width: 515px; border: 2px solid #c8c8c8; border-bottom: 0; background: #fff; }
.search svg { width: 20px; height: 10px; margin: 15px 0 0 22px; }
.apps { width: 830px; height: 22px; margin-left: 20px; }
.tray { flex: 1; display: flex; justify-content: flex-end; border-right: 1px solid #aab6bd; margin-right: 6px; }
.tray time { line-height: 30px; margin: 0 39px 0 134px; white-space: nowrap; }
.note { width: 24px; height: 5px; margin: 17px 30px 0 0; }
.dots { width: 70px; height: 6px; margin-top: 17px; }
```
